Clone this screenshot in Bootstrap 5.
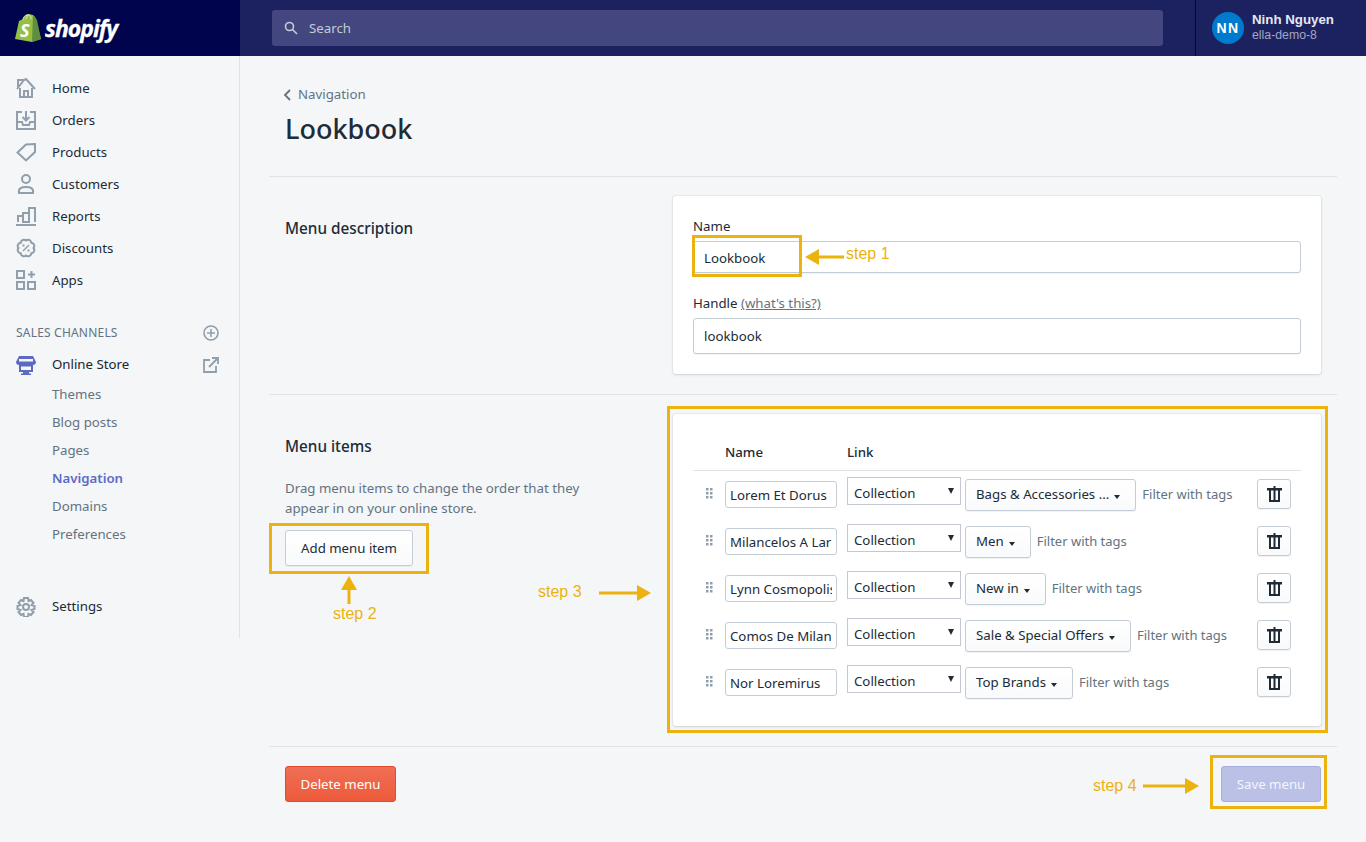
<!DOCTYPE html>
<html lang="en">
<head>
  <meta charset="UTF-8" />
  <meta name="viewport" content="width=device-width, initial-scale=1" />
  <title>Lookbook</title>
  <link href="https://cdn.jsdelivr.net/npm/bootstrap@5.3.0/dist/css/bootstrap.min.css" rel="stylesheet">
  <style>
    body {
      background-color: #f4f6f8;
      font-family: "Noto Sans", sans-serif;
      font-size: 13.25px;
      color: #212b36;
      height: 842px;
      overflow: hidden;
      position: relative;
    }
    .top-bar { height: 56px; background: #1c2260; }
    .brand-area { width: 240px; background: #00044c; padding-left: 15px; gap: 4px; }
    .brand-name { color: #fff; font: italic 700 23px/1 "Open Sans", sans-serif; letter-spacing: -1px; -webkit-text-stroke: .3px #fff; }
    .search-area { flex: 1; padding: 10px 32px; }
    .search-box { height: 36px; background: #43467f; border-radius: 3px; color: #c4cdd5; padding-left: 12px; gap: 11px; }
    .search-label { padding-top: 2px; }
    .user-area { width: 171px; border-left: 1px solid #00044c; padding: 0 0 2px 16px; gap: 8px; }
    .user-avatar { width: 32px; height: 32px; border-radius: 50%; background: #007ace; color: #fff; font: 700 14px "Liberation Sans", sans-serif; letter-spacing: 1.5px; margin-top: 2px; }
    .user-name { color: #e6e7f0; font: 700 13.3px/16px "Liberation Sans", sans-serif; }
    .user-shop { color: #a3a5c4; font: 12.3px/14px "Liberation Sans", sans-serif; }

    .side-bar { width: 240px; height: 582px; border-right: 1px solid #dfe3e8; padding-top: 15px; }
    .side-link { height: 32px; padding: 4px 0 0 16px; color: #212b36; gap: 16px; }
    .side-link svg { flex: none; margin-bottom: 2px; }
    .side-title { height: 32px; margin-top: 21px; padding: 2px 20px 0 16px; color: #637381; font-size: 12px; letter-spacing: .2px; }
    .side-sub { height: 28px; padding-left: 52px; color: #637381; line-height: 28px; }
    .side-sub.is-active { color: #5c6ac4; font-weight: 600; }
    .side-active { padding: 2px 20px 0 16px; }
    .settings-link { margin-top: 42px; padding-top: 2px; }
    .side-active svg, .settings-link svg { margin-bottom: 0; }

    .page-area { flex: 1; padding: 0 29px; }
    .page-head { height: 121px; padding: 28px 16px 0; border-bottom: 1px solid #dfe3e8; }
    .back-link { color: #637381; gap: 6px; height: 22px; margin-left: -2px; }
    .page-title { font-size: 27px; font-weight: 500; line-height: 36px; margin: 5px 0 0; color: #212b36; }
    .page-section { padding: 19px 16px 20px; border-bottom: 1px solid #dfe3e8; }
    .section-side { width: 388px; flex: none; padding-top: 20px; }
    .section-title { font-size: 15.3px; font-weight: 500; line-height: 24px; margin: 0; }
    .white-panel { flex: 1; background: #fff; border-radius: 3px; box-shadow: 0 0 0 1px rgba(63,63,68,.05), 0 1px 3px 0 rgba(63,63,68,.15); padding: 20px; }
    .field-label { line-height: 20px; margin-bottom: 5px; display: block; }
    .field-label a { color: #637381; }
    .field-input { height: 32px; width: 100%; display: block; border: 1px solid #c4cdd5; border-radius: 3px; padding: 2px 10px 0; font-size: 13.25px; color: #212b36; background: #fff; box-shadow: 0 1px 0 rgba(22,29,37,.05); }
    .field-tall { height: 36px; padding-top: 0; }
    .handle-label { margin-top: 20px; }
    .items-help { color: #637381; line-height: 20px; margin: 20px 0 12px; }
    .plain-btn { background: linear-gradient(to bottom, #fff, #f9fafb); border: 1px solid #c4cdd5; border-radius: 3px; color: #212b36; font-size: 13.25px; box-shadow: 0 1px 0 rgba(22,29,37,.05); }
    .add-btn { width: 128px; height: 36px; padding: 2px 0 0; }

    .items-head { height: 37px; border-bottom: 1px solid #dfe3e8; font-weight: 500; padding: 2px 0 0 32px; }
    .items-head span:first-child { width: 122px; }
    .item-row { height: 47px; padding-top: 6px; }
    .drag-dots { width: 32px; padding: 6px 0 0 13px; }
    .item-name { width: 112px; height: 27px; margin: 4px 10px 0 0; border: 1px solid #c4cdd5; border-radius: 3px; padding: 0 4px; font-size: 13.25px; color: #212b36; background: #fff; }
    .select-wrap { width: 114px; height: 28px; position: relative; }
    .select-wrap::after { content: ""; position: absolute; right: 7px; top: 11px; border: 3.5px solid transparent; border-top: 6px solid #212b36; border-bottom: 0; }
    .item-select { width: 100%; height: 28px; border: 1px solid #c4c8d2; border-radius: 0; padding: 6px 6px 0; font-size: 13.25px; color: #212b36; background: #fff; appearance: none; }
    .drop-btn { height: 32px; margin: 2px 0 0 4px; padding: 0 15px 0 10px; gap: 5px; }
    .drop-caret { width: 6px; border: 3px solid transparent; border-top: 4px solid #212b36; border-bottom: 0; margin: 4px 0 0; }
    .filter-text { color: #637381; margin: 3px 0 0 6px; line-height: 28px; font-size: 13px; }
    .trash-btn { width: 34px; height: 30px; margin: 2px 10px 0 auto; padding: 0; display: flex; align-items: center; justify-content: center; }
    .delete-btn { width: 111px; height: 36px; background: linear-gradient(to bottom, #f06f55, #ed5a3b); border: 1px solid #e4492c; color: #fff; border-radius: 3px; font-size: 13.25px; padding: 2px 0 0; }
    .save-btn { width: 100px; height: 36px; background: #bac0e6; border: 1px solid #a8aee0; color: #f4f5fb; border-radius: 3px; font-size: 13.25px; padding: 2px 0 0; }
    .page-foot { padding: 19px 16px 0; }

    .note-box { position: absolute; border: 3px solid #ecb20e; }
    .note-text { position: absolute; color: #ecb20e; font: 16px/18px "Liberation Sans", sans-serif; }
    .note-arrow { position: absolute; }
    .box-one { left: 692px; top: 235px; width: 110px; height: 42px; }
    .box-two { left: 269px; top: 523px; width: 160px; height: 51px; }
    .box-three { left: 667px; top: 406px; width: 661px; height: 327px; }
    .box-four { left: 1210px; top: 755px; width: 117px; height: 54px; }
    .text-one { left: 846px; top: 245px; }
    .text-two { left: 333px; top: 605px; }
    .text-three { left: 538px; top: 583px; }
    .text-four { left: 1093px; top: 777px; }
    .arrow-one { left: 805px; top: 249px; }
    .arrow-two { left: 341px; top: 576px; }
    .arrow-three { left: 599px; top: 585px; }
    .arrow-four { left: 1143px; top: 778px; }
  </style>
</head>
<body>

  <svg width="0" height="0" class="position-absolute">
    <symbol id="dots" viewBox="0 0 7 11"><path fill="#919eab" d="M0 0h2.500v2.500H0zM4 0h2.500v2.500H4zM0 4h2.500v2.500H0zM4 4h2.500v2.500H4zM0 8h2.500v2.500H0zM4 8h2.500v2.500H4z"/></symbol>
    <symbol id="trash" viewBox="0 0 15 16"><path fill="#212b36" fill-rule="evenodd" d="M6.500 0h2v2H15v2.500h-2V16H2V4.500H0V2h6.500zM4 4.500V14h2.500V4.500zM8.500 4.500V14H11V4.500z"/></symbol>
  </svg>

  <header class="top-bar d-flex">
    <div class="brand-area d-flex align-items-center">
      <svg width="26" height="30" viewBox="0 0 26 30"><path d="M0 26 4 8l4-2c1-3 3-5 6-5l4 1 2 2 6 22-9 3z" fill="#95bf47"/><path d="M18 3l2 1 2 3 4 19-9 3z" fill="#5e8e3e"/><path d="M8 7c0-3 2-5 5-5s3 2 3 4M11 6c0-2 1-3 2-3" fill="none" stroke="#e5f0c8" stroke-width=".9"/><text x="5" y="24" fill="#fff" font-family="Open Sans" font-style="italic" font-weight="700" font-size="18">S</text></svg>
      <span class="brand-name">shopify</span>
    </div>
    <div class="search-area">
      <div class="search-box d-flex align-items-center">
        <svg width="14" height="14" viewBox="0 0 14 14" fill="none" stroke="#c4cdd5" stroke-width="1.6"><circle cx="5.500" cy="5.500" r="4"/><path d="m8.500 8.500 4.500 4.500"/></svg>
        <span class="search-label">Search</span>
      </div>
    </div>
    <div class="user-area d-flex align-items-center">
      <div class="user-avatar d-flex align-items-center justify-content-center">NN</div>
      <div>
        <div class="user-name">Ninh Nguyen</div>
        <div class="user-shop">ella-demo-8</div>
      </div>
    </div>
  </header>

  <div class="d-flex">
    <nav class="side-bar">
      <div class="side-link d-flex align-items-center">
        <svg width="20" height="20" viewBox="0 0 20 20" fill="none" stroke="#919eab" stroke-width="2"><path d="M1 11 8 2l2-1 9 10M2 2h6M2 1v9M4 10v9h12v-9M8 19v-6h4v6"/></svg>Home
      </div>
      <div class="side-link d-flex align-items-center">
        <svg width="20" height="20" viewBox="0 0 20 20" fill="none" stroke="#919eab" stroke-width="2"><path d="M6 2H1v17h18V2h-5M1 12h5l1 3h6l1-3h5M10 1v9M6.500 7l3.500 3.500L13.500 7"/></svg>Orders
      </div>
      <div class="side-link d-flex align-items-center">
        <svg width="20" height="20" viewBox="0 0 20 20" fill="none" stroke="#919eab" stroke-width="2"><path d="M1.500 10.500 10 2.500l9-.5v8l-9 8.500zM14.500 6.500h.01"/></svg>Products
      </div>
      <div class="side-link d-flex align-items-center">
        <svg width="20" height="20" viewBox="0 0 20 20" fill="none" stroke="#919eab" stroke-width="2"><circle cx="10" cy="5" r="4"/><path d="M3 19c-1-5 3-6 7-6s8 1 7 6z"/></svg>Customers
      </div>
      <div class="side-link d-flex align-items-center">
        <svg width="20" height="20" viewBox="0 0 20 20" fill="none" stroke="#919eab" stroke-width="2"><path d="M0 19h20M2 16v-6h5v6h6V2h6v14M7 16V7h6"/></svg>Reports
      </div>
      <div class="side-link d-flex align-items-center">
        <svg width="20" height="20" viewBox="0 0 20 20" fill="none" stroke="#919eab" stroke-width="2"><path d="M10 2.500A3.200 3.200 0 0 1 15.300 4.700 3.200 3.200 0 0 1 17.500 10 3.200 3.200 0 0 1 15.300 15.300 3.200 3.200 0 0 1 10 17.500 3.200 3.200 0 0 1 4.700 15.300 3.200 3.200 0 0 1 2.500 10 3.200 3.200 0 0 1 4.700 4.700 3.200 3.200 0 0 1 10 2.500z"/><path d="m7 13 6-6" stroke-width="1.500"/><path d="M6.500 7.500h2M11.500 12.500h2"/></svg>Discounts
      </div>
      <div class="side-link d-flex align-items-center">
        <svg width="20" height="20" viewBox="0 0 20 20" fill="none" stroke="#919eab" stroke-width="2"><path d="M1 1h7v7H1zM1 12h7v7H1zM12 12h7v7h-7zM15.500 1v7M12 4.500h7"/></svg>Apps
      </div>

      <div class="side-title d-flex align-items-center justify-content-between">
        <span>SALES CHANNELS</span>
        <svg width="16" height="16" viewBox="0 0 16 16" fill="none" stroke="#919eab" stroke-width="1.600"><circle cx="8" cy="8" r="7"/><path d="M8 4v8M4 8h8"/></svg>
      </div>
      <div class="side-link side-active d-flex align-items-center">
        <svg width="20" height="20" viewBox="0 0 20 20"><path fill="#5c6ac4" d="M3 1h14l3 6c0 2-1.500 3-3 3H3c-1.500 0-3-1-3-3zM3 10h14v7H3zM7 17h6v1.500h2V20H5v-1.500h2z"/><path fill="#f4f6f8" d="M3 4h14v2.500H3zM5 11.500h10v3.500H5z"/></svg>
        <span class="flex-grow-1 text-dark">Online Store</span>
        <svg width="16" height="16" viewBox="0 0 16 16" fill="none" stroke="#919eab" stroke-width="1.800"><path d="M7 3H1v12h12V9M9 1h6v6M15 1 6 10"/></svg>
      </div>
      <div class="side-sub">Themes</div>
      <div class="side-sub">Blog posts</div>
      <div class="side-sub">Pages</div>
      <div class="side-sub is-active">Navigation</div>
      <div class="side-sub">Domains</div>
      <div class="side-sub">Preferences</div>

      <div class="side-link d-flex align-items-center settings-link">
        <svg width="20" height="20" viewBox="0 0 20 20" fill="none" stroke="#919eab" stroke-width="2"><circle cx="10" cy="10" r="3"/><path d="M8 1h4l.5 3 2.500-1 2.500 3-2 2 3 1v3l-3 1 2 2-2.500 3-2.500-1-.5 3H8l-.5-3-2.500 1-2.500-3 2-2-3-1V9l3-1-2-2L5 3l2.500 1z"/></svg>Settings
      </div>
    </nav>

    <main class="page-area">
      <div class="page-head">
        <div class="back-link d-flex align-items-center">
          <svg width="9" height="12" viewBox="0 0 9 12" fill="none" stroke="#637381" stroke-width="1.800"><path d="M7 1 2 6l5 5"/></svg>
          <span>Navigation</span>
        </div>
        <h1 class="page-title">Lookbook</h1>
      </div>

      <section class="page-section d-flex">
        <div class="section-side"><h2 class="section-title">Menu description</h2></div>
        <div class="white-panel">
          <label class="field-label">Name</label>
          <input class="field-input" value="Lookbook">
          <label class="field-label handle-label">Handle <a href="#">(what's this?)</a></label>
          <input class="field-input field-tall" value="lookbook">
        </div>
      </section>

      <section class="page-section d-flex">
        <div class="section-side">
          <h2 class="section-title">Menu items</h2>
          <p class="items-help">Drag menu items to change the order that they<br>appear in on your online store.</p>
          <button class="plain-btn add-btn">Add menu item</button>
        </div>
        <div class="white-panel">
          <div class="items-head d-flex align-items-center"><span>Name</span><span>Link</span></div>
          <div class="item-row d-flex">
            <div class="drag-dots"><svg width="7" height="11"><use href="#dots"/></svg></div>
            <input class="item-name" value="Lorem Et Dorus">
            <div class="select-wrap"><select class="item-select"><option>Collection</option></select></div>
            <button class="plain-btn drop-btn d-flex align-items-center">Bags &amp; Accessories ...<span class="drop-caret"></span></button>
            <span class="filter-text">Filter with tags</span>
            <button class="plain-btn trash-btn"><svg width="15" height="16"><use href="#trash"/></svg></button>
          </div>
          <div class="item-row d-flex">
            <div class="drag-dots"><svg width="7" height="11"><use href="#dots"/></svg></div>
            <input class="item-name" value="Milancelos A Lar">
            <div class="select-wrap"><select class="item-select"><option>Collection</option></select></div>
            <button class="plain-btn drop-btn d-flex align-items-center">Men<span class="drop-caret"></span></button>
            <span class="filter-text">Filter with tags</span>
            <button class="plain-btn trash-btn"><svg width="15" height="16"><use href="#trash"/></svg></button>
          </div>
          <div class="item-row d-flex">
            <div class="drag-dots"><svg width="7" height="11"><use href="#dots"/></svg></div>
            <input class="item-name" value="Lynn Cosmopolis">
            <div class="select-wrap"><select class="item-select"><option>Collection</option></select></div>
            <button class="plain-btn drop-btn d-flex align-items-center">New in<span class="drop-caret"></span></button>
            <span class="filter-text">Filter with tags</span>
            <button class="plain-btn trash-btn"><svg width="15" height="16"><use href="#trash"/></svg></button>
          </div>
          <div class="item-row d-flex">
            <div class="drag-dots"><svg width="7" height="11"><use href="#dots"/></svg></div>
            <input class="item-name" value="Comos De Milan">
            <div class="select-wrap"><select class="item-select"><option>Collection</option></select></div>
            <button class="plain-btn drop-btn d-flex align-items-center">Sale &amp; Special Offers<span class="drop-caret"></span></button>
            <span class="filter-text">Filter with tags</span>
            <button class="plain-btn trash-btn"><svg width="15" height="16"><use href="#trash"/></svg></button>
          </div>
          <div class="item-row d-flex">
            <div class="drag-dots"><svg width="7" height="11"><use href="#dots"/></svg></div>
            <input class="item-name" value="Nor Loremirus">
            <div class="select-wrap"><select class="item-select"><option>Collection</option></select></div>
            <button class="plain-btn drop-btn d-flex align-items-center">Top Brands<span class="drop-caret"></span></button>
            <span class="filter-text">Filter with tags</span>
            <button class="plain-btn trash-btn"><svg width="15" height="16"><use href="#trash"/></svg></button>
          </div>
        </div>
      </section>

      <div class="page-foot d-flex justify-content-between">
        <button class="delete-btn">Delete menu</button>
        <button class="save-btn">Save menu</button>
      </div>
    </main>
  </div>

  <!-- step annotations drawn over the page -->
  <div class="note-box box-one"></div>
  <div class="note-box box-two"></div>
  <div class="note-box box-three"></div>
  <div class="note-box box-four"></div>
  <span class="note-text text-one">step 1</span>
  <span class="note-text text-two">step 2</span>
  <span class="note-text text-three">step 3</span>
  <span class="note-text text-four">step 4</span>
  <svg class="note-arrow arrow-one" width="39" height="16" viewBox="0 0 39 16" fill="#ecb20e"><path d="M0 8 14 0v6.500h25v3H14V16z"/></svg>
  <svg class="note-arrow arrow-two" width="16" height="28" viewBox="0 0 16 28" fill="#ecb20e"><path d="M8 0l8 14H9.500v14h-3V14H0z"/></svg>
  <svg class="note-arrow arrow-three" width="52" height="16" viewBox="0 0 52 16" fill="#ecb20e"><path d="M52 8 38 0v6.500H0v3h38V16z"/></svg>
  <svg class="note-arrow arrow-four" width="56" height="16" viewBox="0 0 56 16" fill="#ecb20e"><path d="M56 8 42 0v6.500H0v3h42V16z"/></svg>

</body>
</html>
